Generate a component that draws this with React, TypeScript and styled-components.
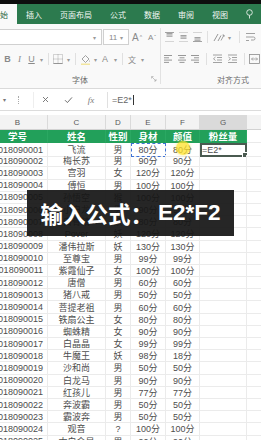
import React from 'react'
import styled, { createGlobalStyle } from 'styled-components'

const GlobalStyle = createGlobalStyle`
  html, body {
    margin: 0;
    padding: 0;
  }
  body {
    width: 261px;
    height: 440px;
    overflow: hidden;
    background: #fff;
    font-family: "Liberation Sans", "Noto Sans CJK SC", sans-serif;
  }
`

const Screen = styled.div`
  position: relative;
  width: 261px;
  height: 440px;
  overflow: hidden;
  background: #fff;
`

const TopStrip = styled.div`
  height: 4px;
  background: #0d0d0d;
`

const TabBar = styled.div`
  display: flex;
  align-items: stretch;
  height: 20px;
  margin-left: -17px;
  background: #2c7a4e;
`

const Tab = styled.div<{ $active?: boolean }>`
  display: flex;
  align-items: center;
  padding: 0 9px;
  font-size: 8px;
  white-space: nowrap;
  color: ${({ $active }) => ($active ? '#2c6a45' : '#f2f7f3')};
  background: ${({ $active }) => ($active ? '#f9f9f9' : 'transparent')};
`

const Ribbon = styled.div`
  display: flex;
  height: 64px;
  background: #f9f9f9;
  border-bottom: 1px solid #dadada;
`

const Group = styled.div<{ $width: number }>`
  display: flex;
  flex-direction: column;
  width: ${({ $width }) => $width}px;
  flex-shrink: 0;
  padding-top: 4px;
`

const GroupDivider = styled.div`
  width: 1px;
  margin: 4px 0 4px;
  background: #e2e2e2;
`

const ToolRow = styled.div`
  display: flex;
  align-items: center;
  height: 18px;
  margin-bottom: 4px;
  white-space: nowrap;
`

const GroupLabel = styled.div`
  position: relative;
  display: flex;
  align-items: center;
  justify-content: center;
  height: 14px;
  font-size: 8px;
  color: #6a6a6a;
`

const Launcher = styled.span`
  position: absolute;
  right: 3px;
  top: 4px;
  display: flex;
`

const Combo = styled.div<{ $width: number }>`
  display: flex;
  align-items: center;
  justify-content: space-between;
  width: ${({ $width }) => $width}px;
  height: 16px;
  padding: 0 3px 0 5px;
  box-sizing: border-box;
  background: #fff;
  border: 1px solid #d0d0d0;
  font-size: 8px;
  color: #888;
`

const Tool = styled.span<{ $w?: number }>`
  display: flex;
  align-items: center;
  justify-content: center;
  width: ${({ $w }) => $w ?? 13}px;
  height: 16px;
  font-size: 9px;
  color: #8a8a8a;
`

const Caret = styled.span`
  display: flex;
  align-items: center;
  justify-content: center;
  width: 8px;
  font-size: 6px;
  color: #9a9a9a;
`

const Sep = styled.span`
  width: 1px;
  height: 12px;
  margin: 0 3px;
  background: #e0e0e0;
`

const FormulaBar = styled.div`
  display: flex;
  align-items: center;
  height: 21px;
  background: #fff;
  border-bottom: 1px solid #dcdcdc;
`

const NameBox = styled.div`
  display: flex;
  align-items: center;
  width: 33px;
  height: 100%;
  font-size: 6px;
  color: #777;
  padding-left: 3px;
  box-sizing: border-box;
  gap: 12px;
`

const Dots = styled.span`
  width: 1px;
  height: 8px;
  border-left: 1px dotted #aaa;
`

const FxArea = styled.div`
  display: flex;
  align-items: center;
  width: 73px;
  height: 16px;
  border-right: 1px solid #e0e0e0;
  border-left: 1px solid #eeeeee;
`

const FxButton = styled.span<{ $w: number }>`
  display: flex;
  justify-content: center;
  width: ${({ $w }) => $w}px;
  font-size: 9px;
  color: #7a7a7a;
`

const FormulaText = styled.div`
  display: flex;
  align-items: center;
  padding-left: 4px;
  font-size: 9px;
  color: #666;
`

const Caret2 = styled.span`
  width: 1px;
  height: 10px;
  margin-left: 1px;
  background: #333;
`

const Sheet = styled.div`
  margin-top: 4px;
  margin-left: -12px;
`

const cols = '60px 58px 25px 35px 34px 47px 60px'

const ColHeaderRow = styled.div`
  display: grid;
  grid-template-columns: ${cols};
  height: 14px;
  background: #f3f3f3;
  border-bottom: 1px solid #d2d2d2;
`

const ColHeader = styled.div<{ $selected?: boolean }>`
  display: flex;
  align-items: center;
  justify-content: center;
  font-size: 8px;
  color: #5a5a5a;
  border-right: 1px solid #dadada;
  background: ${({ $selected }) => ($selected ? '#dadada' : 'transparent')};
`

const HeadRow = styled.div`
  display: grid;
  grid-template-columns: ${cols};
  height: 13px;
`

const HeadCell = styled.div<{ $blank?: boolean }>`
  display: flex;
  align-items: center;
  justify-content: center;
  font-size: 9.5px;
  font-weight: bold;
  color: #fff;
  background: ${({ $blank }) => ($blank ? '#fff' : '#22a05a')};
  border-right: 1px solid ${({ $blank }) => ($blank ? '#eaeaea' : '#2aa862')};
  border-bottom: 1px solid ${({ $blank }) => ($blank ? '#eaeaea' : '#22a05a')};
  white-space: nowrap;
  overflow: hidden;
`

const DataRow = styled.div`
  display: grid;
  grid-template-columns: ${cols};
  height: 12.2px;
`

const Cell = styled.div<{ $align?: 'left' | 'center' | 'right'; $mode?: 'ref' | 'active' }>`
  position: relative;
  display: flex;
  align-items: center;
  justify-content: ${({ $align }) =>
    $align === 'right' ? 'flex-end' : $align === 'left' ? 'flex-start' : 'center'};
  padding: 0 ${({ $align }) => ($align === 'right' ? '4px' : $align === 'left' ? '2px' : '0')};
  box-sizing: border-box;
  font-size: 9px;
  color: #4d4d4d;
  white-space: nowrap;
  overflow: ${({ $mode }) => ($mode ? 'visible' : 'hidden')};
  border-right: 1px solid #ebebeb;
  border-bottom: 1px solid #ebebeb;
  ${({ $mode }) =>
    $mode === 'ref'
      ? 'outline: 1px dashed #3f73d6; outline-offset: -1px;'
      : $mode === 'active'
        ? 'outline: 2px solid #4a5a50; outline-offset: -2px;'
        : ''}
`

const FillHandle = styled.span`
  position: absolute;
  right: -2px;
  bottom: -2px;
  width: 4px;
  height: 4px;
  background: #4a5a50;
  border: 1px solid #fff;
`

const ClickDot = styled.span`
  position: absolute;
  left: 10px;
  top: -2px;
  width: 14px;
  height: 14px;
  border-radius: 50%;
  background: rgba(255, 226, 40, 0.75);
  box-shadow: 0 0 3px rgba(255, 220, 0, 0.6);
`

const Banner = styled.div`
  position: absolute;
  left: 27px;
  top: 190px;
  width: 207px;
  height: 46px;
  display: flex;
  align-items: center;
  justify-content: center;
  background: rgba(22, 22, 22, 0.93);
  color: #fff;
  font-size: 22.5px;
  font-weight: bold;
  font-family: "Liberation Sans", "Noto Sans CJK SC", sans-serif;
  white-space: nowrap;
`

const Formula = styled.span`
  margin-left: 5px;
`

const gray = '#8c8c8c'

const Lines = ({ variant }: { variant: 'top' | 'mid' | 'bot' | 'left' | 'center' | 'right' }) => {
  const rows: Record<string, [number, number][]> = {
    left: [[1, 9], [1, 6], [1, 9], [1, 6]],
    center: [[1, 9], [2.5, 7.5], [1, 9], [2.5, 7.5]],
    right: [[1, 9], [4, 9], [1, 9], [4, 9]],
  }
  if (variant === 'top' || variant === 'mid' || variant === 'bot') {
    const y0 = variant === 'top' ? 1.5 : variant === 'mid' ? 3.5 : 5.5
    return (
      <svg width="11" height="10" viewBox="0 0 11 10">
        <line x1="1" y1="0.5" x2="10" y2="0.5" stroke={gray} strokeWidth="0.8" opacity={variant === 'top' ? 1 : 0.4} />
        <line x1="1" y1="9.5" x2="10" y2="9.5" stroke={gray} strokeWidth="0.8" opacity={variant === 'bot' ? 1 : 0.4} />
        {[0, 2, 4].map((d) => (
          <line key={d} x1="2.5" y1={y0 + d * 0.7} x2="8.5" y2={y0 + d * 0.7} stroke={gray} strokeWidth="0.8" />
        ))}
      </svg>
    )
  }
  return (
    <svg width="11" height="10" viewBox="0 0 11 10">
      {rows[variant].map(([a, b], i) => (
        <line key={i} x1={a} y1={1.5 + i * 2.3} x2={b} y2={1.5 + i * 2.3} stroke={gray} strokeWidth="0.9" />
      ))}
    </svg>
  )
}

const BorderIcon = () => (
  <svg width="10" height="10" viewBox="0 0 10 10">
    <rect x="0.5" y="0.5" width="9" height="9" fill="none" stroke={gray} strokeWidth="0.7" strokeDasharray="1 1" />
    <line x1="5" y1="0.5" x2="5" y2="9.5" stroke={gray} strokeWidth="0.7" strokeDasharray="1 1" />
    <line x1="0.5" y1="5" x2="9.5" y2="5" stroke={gray} strokeWidth="0.7" strokeDasharray="1 1" />
    <line x1="0.5" y1="9.5" x2="9.5" y2="9.5" stroke={gray} strokeWidth="0.9" />
  </svg>
)

const BucketIcon = () => (
  <svg width="11" height="11" viewBox="0 0 11 11">
    <path d="M2 5 L5.5 1.5 L9 5 L5.5 8.5 Z" fill="none" stroke={gray} strokeWidth="0.8" />
    <path d="M9.3 6 Q10 7.5 9.3 8 Q8.6 7.5 9.3 6 Z" fill={gray} />
    <rect x="1" y="9.6" width="9" height="1.2" fill="#f1e28a" />
  </svg>
)

const WrapIcon = () => (
  <svg width="11" height="10" viewBox="0 0 11 10">
    <line x1="1" y1="1.5" x2="10" y2="1.5" stroke={gray} strokeWidth="0.8" />
    <path d="M1 5 H8.5 Q10 5 10 6.5 Q10 8 8.5 8 H6" fill="none" stroke={gray} strokeWidth="0.8" />
    <line x1="1" y1="8.5" x2="4" y2="8.5" stroke={gray} strokeWidth="0.8" />
  </svg>
)

const MergeIcon = () => (
  <svg width="11" height="10" viewBox="0 0 11 10">
    <rect x="0.5" y="0.5" width="10" height="9" fill="none" stroke={gray} strokeWidth="0.8" />
    <path d="M2.5 5 H8.5 M7 3.5 L8.5 5 L7 6.5 M4 3.5 L2.5 5 L4 6.5" fill="none" stroke={gray} strokeWidth="0.7" />
  </svg>
)

const IndentIcon = ({ out }: { out?: boolean }) => (
  <svg width="11" height="10" viewBox="0 0 11 10">
    {[1, 3.5, 6, 8.5].map((y, i) => (
      <line key={y} x1={i === 1 || i === 2 ? 5 : 1} y1={y} x2="10" y2={y} stroke={gray} strokeWidth="0.8" />
    ))}
    <path d={out ? 'M3.5 3 L1.5 4.75 L3.5 6.5' : 'M1.5 3 L3.5 4.75 L1.5 6.5'} fill="none" stroke={gray} strokeWidth="0.8" />
  </svg>
)

const OrientIcon = () => (
  <svg width="13" height="11" viewBox="0 0 13 11">
    <path d="M2 9 L6 2 M6 9 L9 3.5" stroke={gray} strokeWidth="0.9" fill="none" />
    <path d="M9 8.5 L12 3 M10.5 3 L12 3 L12 4.8" stroke={gray} strokeWidth="0.8" fill="none" />
  </svg>
)

const LauncherIcon = () => (
  <svg width="6" height="6" viewBox="0 0 6 6">
    <path d="M0.5 2.5 V0.5 H2.5 M1 1 L5 5 M5 3 V5 H3" fill="none" stroke="#a0a0a0" strokeWidth="0.6" />
  </svg>
)

const BulbIcon = () => (
  <svg width="7" height="10" viewBox="0 0 7 10">
    <circle cx="3.5" cy="3.5" r="2.8" fill="none" stroke="#e8f1ea" strokeWidth="0.9" />
    <line x1="3.5" y1="6.3" x2="3.5" y2="9.5" stroke="#e8f1ea" strokeWidth="0.9" />
  </svg>
)

const CheckIcon = () => (
  <svg width="9" height="8" viewBox="0 0 9 8">
    <path d="M1 4.2 L3.4 6.6 L8 1.4" fill="none" stroke="#6f6f6f" strokeWidth="1" />
  </svg>
)

const CrossIcon = () => (
  <svg width="7" height="7" viewBox="0 0 7 7">
    <path d="M1 1 L6 6 M6 1 L1 6" stroke="#6f6f6f" strokeWidth="0.9" />
  </svg>
)

const Sup = styled.sup`
  font-size: 5px;
  margin-left: 1px;
`

type Row = [string, string, string, string, string]

const rows: Row[] = [
  ['2018090001', '飞流', '男', '80分', '80分'],
  ['2018090002', '梅长苏', '男', '90分', '90分'],
  ['2018090003', '宫羽', '女', '120分', '120分'],
  ['2018090004', '傅恒', '男', '100分', '100分'],
  ['2018090005', '孙悟空', '猴', '100分', '100分'],
  ['2018090006', '小白龙', '男', '90分', '90分'],
  ['2018090007', '白骨精', '妖', '80分', '80分'],
  ['2018090008', 'Pover', '妖', '120分', '120分'],
  ['2018090009', '潘伟拉斯', '妖', '130分', '130分'],
  ['2018090010', '至尊宝', '男', '99分', '99分'],
  ['2018090011', '紫霞仙子', '女', '100分', '100分'],
  ['2018090012', '唐僧', '男', '60分', '60分'],
  ['2018090013', '猪八戒', '男', '50分', '50分'],
  ['2018090014', '菩提老祖', '男', '60分', '60分'],
  ['2018090015', '铁扇公主', '女', '80分', '80分'],
  ['2018090016', '蜘蛛精', '女', '90分', '90分'],
  ['2018090017', '白晶晶', '女', '99分', '99分'],
  ['2018090018', '牛魔王', '妖', '98分', '18分'],
  ['2018090019', '沙和尚', '男', '50分', '50分'],
  ['2018090020', '白龙马', '男', '90分', '90分'],
  ['2018090021', '红孩儿', '男', '77分', '77分'],
  ['2018090022', '奔波霸', '男', '50分', '50分'],
  ['2018090023', '霸波奔', '男', '50分', '50分'],
  ['2018090024', '观音', '?', '100分', '100分'],
  ['2018090025', '太白金星', '男', '90分', '90分'],
]

const tabs = ['开始', '插入', '页面布局', '公式', '数据', '审阅', '视图']

export default function App() {
  return (
    <Screen>
      <GlobalStyle />
      <TopStrip />
      <TabBar>
        {tabs.map((t, i) => (
          <Tab key={t} $active={i === 0}>
            {t}
          </Tab>
        ))}
        <Tab>
          <BulbIcon />
        </Tab>
      </TabBar>

      <Ribbon>
        <Group $width={160}>
          <ToolRow>
            <Combo $width={102} style={{ borderLeft: 'none' }}>
              <span />
              <Caret>▾</Caret>
            </Combo>
            <Combo $width={26} style={{ marginLeft: 1 }}>
              <span>11</span>
              <Caret>▾</Caret>
            </Combo>
            <Tool $w={16} style={{ fontSize: 10 }}>
              A<Sup>^</Sup>
            </Tool>
            <Tool $w={14} style={{ fontSize: 8 }}>
              A<Sup>ˇ</Sup>
            </Tool>
          </ToolRow>
          <ToolRow style={{ paddingLeft: 2 }}>
            <Tool $w={11} style={{ fontWeight: 'bold' }}>B</Tool>
            <Tool $w={13} style={{ fontStyle: 'italic', fontFamily: '"Liberation Serif", serif' }}>I</Tool>
            <Tool $w={11} style={{ textDecoration: 'underline' }}>U</Tool>
            <Caret>▾</Caret>
            <Sep />
            <Tool $w={12}>
              <BorderIcon />
            </Tool>
            <Caret>▾</Caret>
            <Sep />
            <Tool $w={12}>
              <BucketIcon />
            </Tool>
            <Caret>▾</Caret>
            <Tool $w={12}>A</Tool>
            <Caret>▾</Caret>
            <Sep />
            <Tool $w={12} style={{ fontSize: 8 }}>文</Tool>
            <Caret>▾</Caret>
          </ToolRow>
          <GroupLabel>
            字体
            <Launcher>
              <LauncherIcon />
            </Launcher>
          </GroupLabel>
        </Group>
        <GroupDivider />
        <Group $width={100}>
          <ToolRow style={{ paddingLeft: 1 }}>
            <Tool $w={14}>
              <Lines variant="top" />
            </Tool>
            <Tool $w={14}>
              <Lines variant="mid" />
            </Tool>
            <Tool $w={14}>
              <Lines variant="bot" />
            </Tool>
            <Sep />
            <Tool $w={14}>
              <OrientIcon />
            </Tool>
            <Caret>▾</Caret>
            <Sep style={{ marginLeft: 6 }} />
            <Tool $w={14}>
              <WrapIcon />
            </Tool>
          </ToolRow>
          <ToolRow style={{ paddingLeft: 1 }}>
            <Tool $w={14}>
              <Lines variant="left" />
            </Tool>
            <Tool $w={14}>
              <Lines variant="center" />
            </Tool>
            <Tool $w={14}>
              <Lines variant="right" />
            </Tool>
            <Sep />
            <Tool $w={16}>
              <IndentIcon out />
            </Tool>
            <Tool $w={16}>
              <IndentIcon />
            </Tool>
            <Sep />
            <Tool $w={14}>
              <MergeIcon />
            </Tool>
          </ToolRow>
          <GroupLabel style={{ justifyContent: 'flex-end', paddingRight: 12 }}>对齐方式</GroupLabel>
        </Group>
      </Ribbon>

      <FormulaBar>
        <NameBox>
          <span>▾</span>
          <Dots />
        </NameBox>
        <FxArea>
          <FxButton $w={22}>
            <CrossIcon />
          </FxButton>
          <FxButton $w={24}>
            <CheckIcon />
          </FxButton>
          <FxButton $w={22} style={{ fontStyle: 'italic', fontFamily: '"Liberation Serif", serif' }}>
            fx
          </FxButton>
        </FxArea>
        <FormulaText>
          =E2*
          <Caret2 />
        </FormulaText>
      </FormulaBar>

      <Sheet>
        <ColHeaderRow>
          {['B', 'C', 'D', 'E', 'F', 'G', 'H'].map((c) => (
            <ColHeader key={c} $selected={c === 'G'}>
              {c === 'H' ? '' : c}
            </ColHeader>
          ))}
        </ColHeaderRow>
        <HeadRow>
          <HeadCell>学号</HeadCell>
          <HeadCell>姓名</HeadCell>
          <HeadCell>性别</HeadCell>
          <HeadCell>身材</HeadCell>
          <HeadCell>颜值</HeadCell>
          <HeadCell>粉丝量</HeadCell>
          <HeadCell $blank />
        </HeadRow>
        {rows.map((r, i) => (
          <DataRow key={r[0]}>
            <Cell $align="right">{r[0]}</Cell>
            <Cell>{r[1]}</Cell>
            <Cell>{r[2]}</Cell>
            <Cell $mode={i === 0 ? 'ref' : undefined}>{r[3]}</Cell>
            <Cell style={i === 0 ? { overflow: 'visible' } : undefined}>
              {r[4]}
              {i === 0 && <ClickDot />}
            </Cell>
            <Cell $align="left" $mode={i === 0 ? 'active' : undefined}>
              {i === 0 && '=E2*'}
              {i === 0 && <FillHandle />}
            </Cell>
            <Cell />
          </DataRow>
        ))}
      </Sheet>

      <Banner>
        输入公式：<Formula>E2*F2</Formula>
      </Banner>
    </Screen>
  )
}
